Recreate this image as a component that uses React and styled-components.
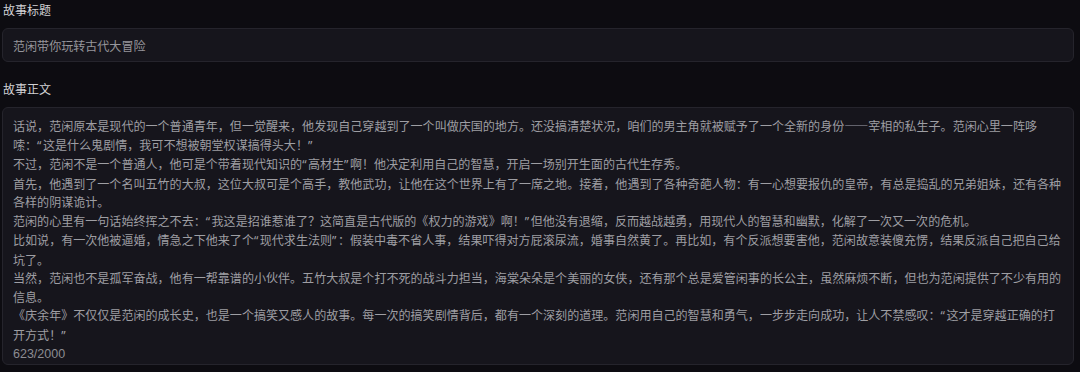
import React from 'react';
import styled, { createGlobalStyle } from 'styled-components';

const GlobalStyle = createGlobalStyle`
  html, body {
    margin: 0;
    padding: 0;
    background: #0d0c11;
  }
  body {
    font-family: "Noto Sans CJK SC", "Noto Sans", sans-serif;
  }
`;

const Page = styled.div`
  width: 1080px;
  height: 372px;
  box-sizing: border-box;
  padding: 0 6px 0 2px;
  display: flex;
  flex-direction: column;
  overflow: hidden;
`;

const Label = styled.div`
  font-size: 12px;
  line-height: 20px;
  color: #d2d2d5;
  padding-left: 1px;
  margin-top: ${p => p.$top || 0}px;
  margin-bottom: 8px;
`;

const Field = styled.div`
  box-sizing: border-box;
  background: #16151c;
  border: 1px solid #25242c;
  border-radius: 6px;
  color: #9e9ea3;
`;

const TitleInput = styled(Field)`
  height: 34px;
  display: flex;
  align-items: center;
  padding: 0 10px;
  font-size: 12.05px;
  color: #96969b;
`;

const BodyArea = styled(Field)`
  height: 258px;
  padding: 9px 10px 6px 10px;
  font-size: 12.05px;
  line-height: 18.5px;
`;

const Line = styled.div`
  white-space: pre;
`;

const Quote = styled.span`
  font-family: "Noto Sans", "DejaVu Sans", sans-serif;
  letter-spacing: 1.5px;
`;

const Counter = styled.div`
  font-family: "Liberation Sans", Arial, sans-serif;
  font-size: 12.5px;
  line-height: 18.5px;
  color: #8c8c92;
`;

const lines = [
  '话说，范闲原本是现代的一个普通青年，但一觉醒来，他发现自己穿越到了一个叫做庆国的地方。还没搞清楚状况，咱们的男主角就被赋予了一个全新的身份——宰相的私生子。范闲心里一阵哆',
  '嗦：“这是什么鬼剧情，我可不想被朝堂权谋搞得头大！”',
  '不过，范闲不是一个普通人，他可是个带着现代知识的“高材生”啊！他决定利用自己的智慧，开启一场别开生面的古代生存秀。',
  '首先，他遇到了一个名叫五竹的大叔，这位大叔可是个高手，教他武功，让他在这个世界上有了一席之地。接着，他遇到了各种奇葩人物：有一心想要报仇的皇帝，有总是捣乱的兄弟姐妹，还有各种',
  '各样的阴谋诡计。',
  '范闲的心里有一句话始终挥之不去：“我这是招谁惹谁了？这简直是古代版的《权力的游戏》啊！”但他没有退缩，反而越战越勇，用现代人的智慧和幽默，化解了一次又一次的危机。',
  '比如说，有一次他被逼婚，情急之下他来了个“现代求生法则”：假装中毒不省人事，结果吓得对方屁滚尿流，婚事自然黄了。再比如，有个反派想要害他，范闲故意装傻充愣，结果反派自己把自己给',
  '坑了。',
  '当然，范闲也不是孤军奋战，他有一帮靠谱的小伙伴。五竹大叔是个打不死的战斗力担当，海棠朵朵是个美丽的女侠，还有那个总是爱管闲事的长公主，虽然麻烦不断，但也为范闲提供了不少有用的',
  '信息。',
  '《庆余年》不仅仅是范闲的成长史，也是一个搞笑又感人的故事。每一次的搞笑剧情背后，都有一个深刻的道理。范闲用自己的智慧和勇气，一步步走向成功，让人不禁感叹：“这才是穿越正确的打',
  '开方式！”',
];

// curly quotes are set in a Latin face so they stay narrow
const renderLine = text =>
  text.split(/([“”])/).map((part, i) =>
    part === '“' || part === '”' ? <Quote key={i}>{part}</Quote> : part
  );

export default function App() {
  return (
    <>
      <GlobalStyle />
      <Page lang="zh-CN">
        <Label>故事标题</Label>
        <TitleInput>范闲带你玩转古代大冒险</TitleInput>
        <Label $top={17}>故事正文</Label>
        <BodyArea>
          {lines.map((l, i) => (
            <Line key={i}>{renderLine(l)}</Line>
          ))}
          <Counter>623/2000</Counter>
        </BodyArea>
      </Page>
    </>
  );
}
